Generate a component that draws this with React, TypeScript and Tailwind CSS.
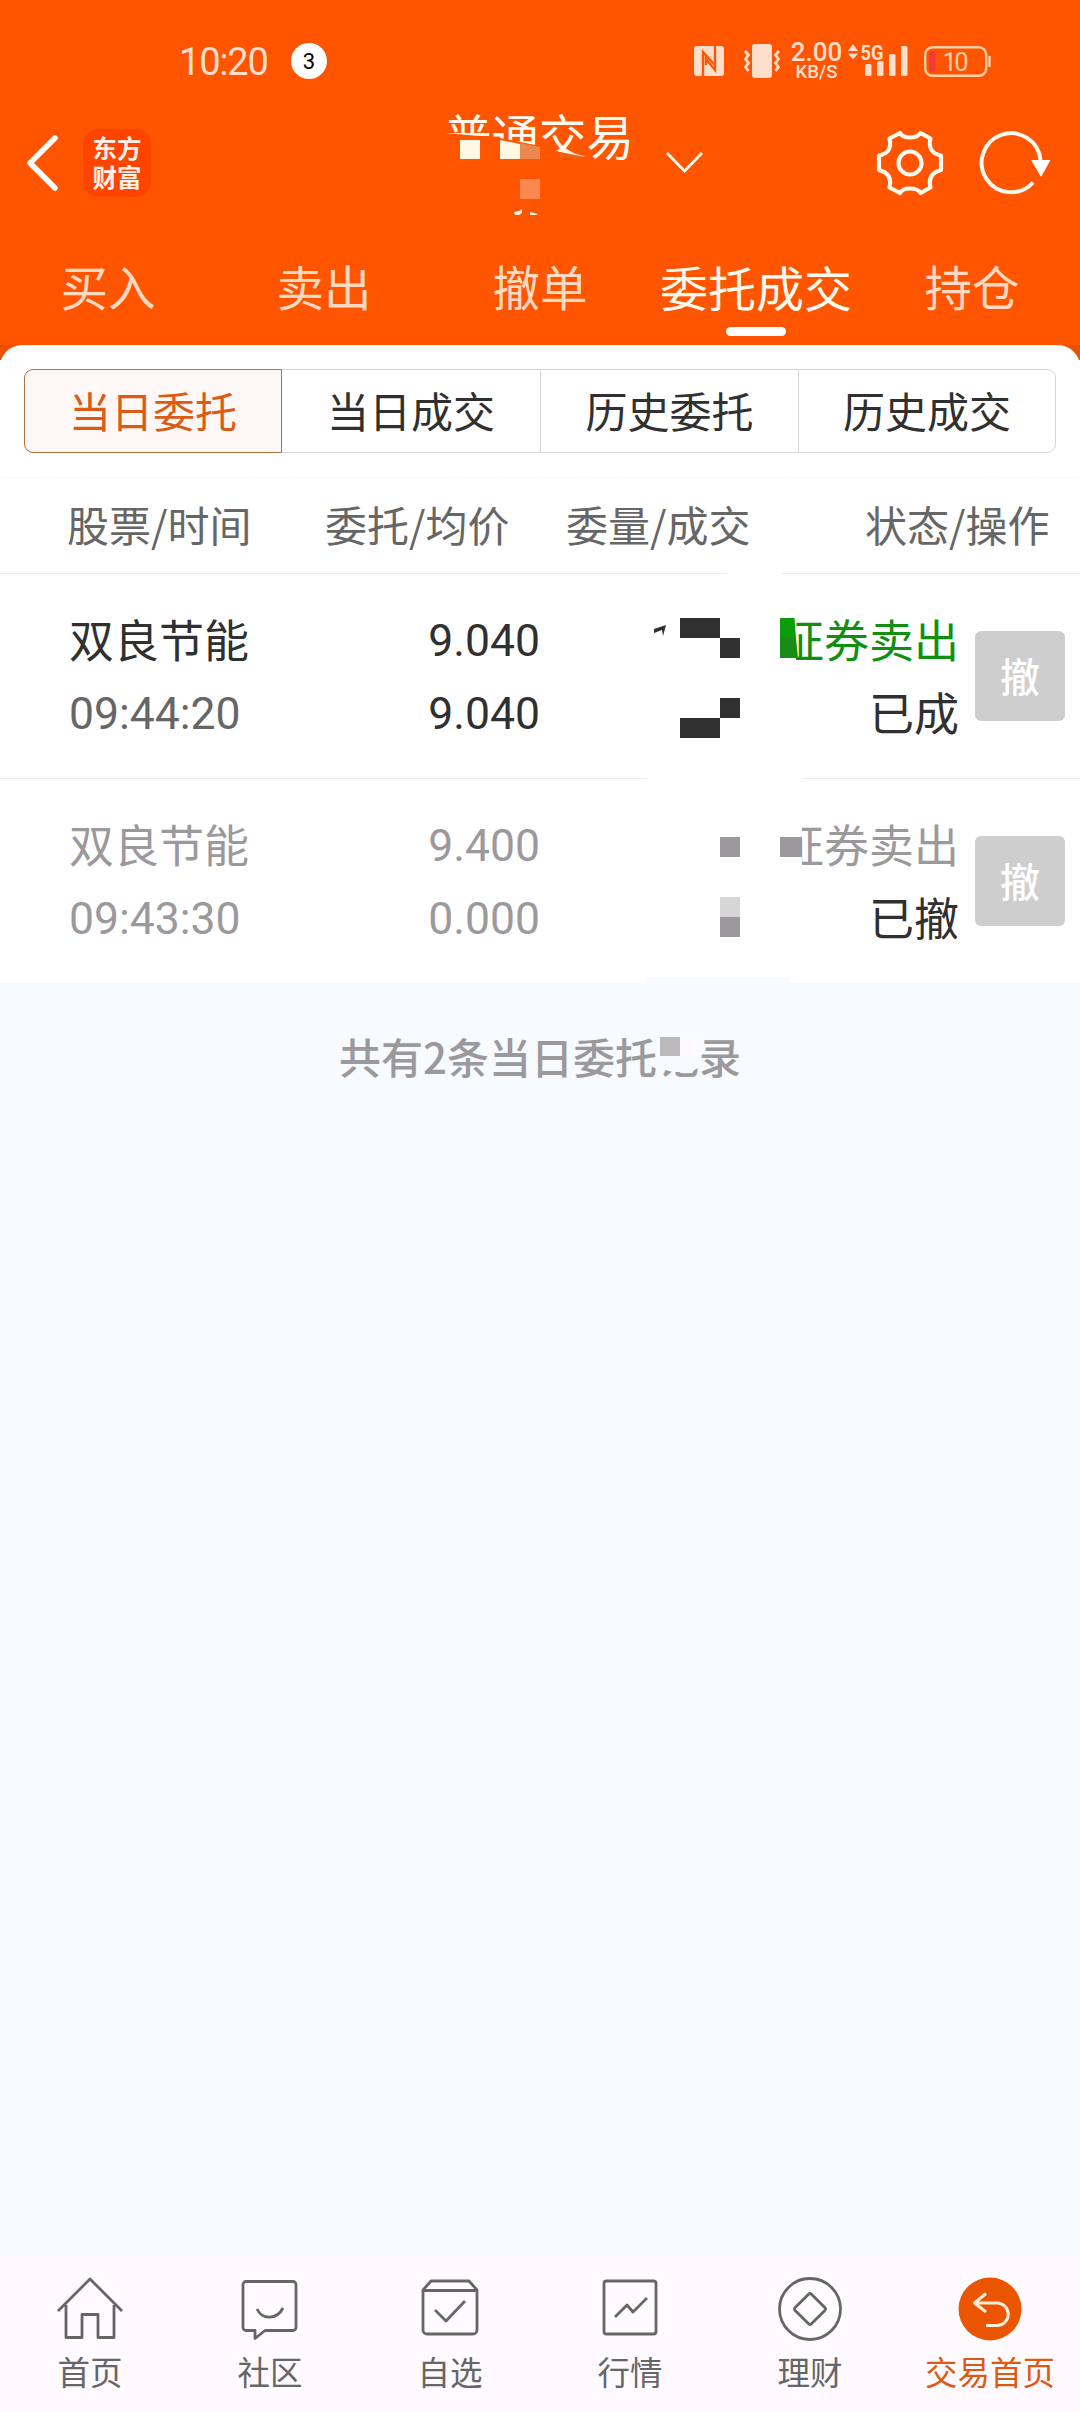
import type { ReactNode } from 'react';

const tabs = ['买入', '卖出', '撤单', '委托成交', '持仓'];
const segments = ['当日委托', '当日成交', '历史委托', '历史成交'];

function StatusBar() {
  return (
    <div className="flex h-[122px] items-center text-[#ffdfcc]">
      <span className="ml-[179px] w-[112px] font-[Roboto] text-[38px] leading-[44px] tracking-[-1.2px] mt-[2px]">10:20</span>
      <span className="flex size-[36px] items-center justify-center rounded-full bg-white font-[Roboto] text-[22px] text-black">3</span>
      <svg className="ml-[367px] h-[36px] w-[86px]" viewBox="0 0 86 36" fill="none">
        <rect x="0" y="3" width="30" height="30" rx="3" fill="#ffdfcc" />
        <path d="M9 33V9l12 13V14M21 3v24L12 16v6" stroke="#ff5500" strokeWidth="2.4" />
        <rect x="58" y="1" width="20" height="34" rx="3" fill="#ffdfcc" />
        <path d="M51 8l3.500 4-3 4 3 4-3 4 3 4M85 8l-3.500 4 3 4-3 4 3 4-3 4" stroke="#ffdfcc" strokeWidth="2.8" />
      </svg>
      <div className="ml-[9px] flex w-[55px] flex-col items-center font-[Roboto] font-medium">
        <span className="text-[26px] leading-[20px]">2.00</span>
        <span className="mt-px text-[18.5px] leading-[18px]">KB/S</span>
      </div>
      <svg className="ml-[3px] h-[36px] w-[64px]" viewBox="0 0 64 36" fill="#ffdfcc">
        <path d="M1 8l5-7 5 7zM1 10.500h10l-5 6z" />
        <text x="13.500" y="17" fontFamily="Roboto" fontWeight="700" fontSize="21" textLength="23" lengthAdjust="spacingAndGlyphs">5G</text>
        <rect x="18" y="21" width="6.5" height="12" rx="1.5" />
        <rect x="30" y="18" width="6.5" height="15" rx="1.5" />
        <rect x="42" y="11" width="6.5" height="22" rx="1.5" />
        <rect x="54" y="3" width="6.5" height="30" rx="1.5" />
      </svg>
      <svg className="ml-[13px] h-[34px] w-[70px]" viewBox="0 0 70 34" fill="none">
        <rect x="1.2" y="3.2" width="61" height="28.6" rx="7.5" stroke="#ffcfa6" strokeWidth="2.4" />
        <rect x="5" y="7" width="6.5" height="21" rx="3" fill="#f23a3a" />
        <path d="M65.5 12v11" stroke="#ffcfa6" strokeWidth="2.4" />
        <text x="18.500" y="26.5" fontFamily="Roboto" fontSize="25.5" fill="#ffcfa6" textLength="26">10</text>
      </svg>
    </div>
  );
}

function TitleBar() {
  return (
    <div className="flex h-[82px] items-center">
      <svg className="ml-[23px] h-[60px] w-[38px]" viewBox="0 0 38 60" fill="none" stroke="#fff" strokeWidth="5.5" strokeLinecap="round" strokeLinejoin="round">
        <path d="M32 5L7 30l25 25" />
      </svg>
      <div className="ml-[22px] flex size-[68px] flex-col items-center justify-center rounded-[15px] bg-[#ff4400] text-[24.5px] font-bold leading-[29px] text-[#fff1ea]">
        <span className="relative top-[-1px]">东方</span>
        <span className="relative top-[-1px]">财富</span>
      </div>
      <div className="relative ml-[296px] h-[100px] w-[190px] self-start">
        <span className="absolute left-[-3px] top-[-15px] whitespace-nowrap text-[47.5px] leading-[56px] text-[#fffaf0]">普通交易</span>
        <svg className="absolute left-[-7px] top-[-22px] h-[120px] w-[200px]" viewBox="440 100 200 120" fill="#ff5500">
          <path d="M440 132.500L490 137L500 138L540 146L556 151L573 153L588 157V172H440z" />
          <path d="M460 140h20v19h-20zM500 140l20 4v15h-20z" fill="#fff8e4" />
          <path d="M520 143l20 4v12h-20z" fill="#ea8850" />
          <path d="M558 150l8 1 20 6-14-2-13-3z" fill="#fff8e4" />
          <path d="M560 152l20 4v3l-20-2z" fill="#ee6012" />
          <rect x="520" y="179" width="20" height="20" fill="#fa8850" />
          <path d="M514 212l5-1 3-2v4l-3 2h-4zM530 212l8 2-2 1h-6z" fill="#fff8e4" />
        </svg>
      </div>
      <svg className="ml-[28px] h-[22px] w-[40px]" viewBox="0 0 40 22" fill="none" stroke="#fffaf0" strokeWidth="2.8">
        <path d="M2 1l17.500 18L37 1" />
      </svg>
      <svg className="ml-[170px] size-[70px]" viewBox="-35 -35 70 70" fill="none" stroke="#fffaf0" strokeWidth="4.2" strokeLinejoin="round">
        <circle r="11.500" />
        <path d="M-10-30C-7-24 7-24 10.500-30L20.500-24.500C18-14 23-9 31-7.500V7C23 9 18 14 20.500 24.500L10.500 30C7 24-7 24-10 30L-20.500 24.500C-18 14-23 9-31 7V-7.500C-23-9-18-14-20.500-24.500Z" />
      </svg>
      <svg className="ml-[31px] size-[76px]" viewBox="-35 -38 76 76" fill="none">
        <path d="M29.500-3A29.500 29.500 0 1 0 22 19.500" stroke="#fffaf0" strokeWidth="4" />
        <path d="M20-3h19.500L30 14z" fill="#fff" />
      </svg>
    </div>
  );
}

function Tabs() {
  return (
    <div className="grid h-[141px] grid-cols-5">
      {tabs.map((t) => (
        <div key={t} className="flex flex-col items-center whitespace-nowrap pt-[54px]">
          <span className={t === '委托成交' ? 'text-[48px] leading-[56px] text-[#fffaf0]' : 'text-[47.5px] leading-[56px] text-[#ffd9c0]'}>{t}</span>
          {t === '委托成交' && <span className="mt-[13px] h-[9px] w-[60px] rounded-full bg-white" />}
        </div>
      ))}
    </div>
  );
}

function Segments() {
  return (
    <div className="grid h-[84px] grid-cols-4 text-[42px] leading-none text-[#303030]">
      {segments.map((s, i) => (
        <div
          key={s}
          className={
            'flex items-center justify-center pb-[2px] ' +
            (i === 0
              ? 'rounded-l-[9px] border border-[#b0703f] bg-[#fff6f6] text-[#dc5a14]'
              : i === 3
                ? 'rounded-r-[9px] border border-[#d6d6da]'
                : i === 2
                  ? 'border-y border-l border-[#d6d6da]'
                  : 'border-y border-[#d6d6da]')
          }
        >
          {s}
        </div>
      ))}
    </div>
  );
}

function TableHead() {
  return (
    <div className="flex h-[96px] border-b border-[#ececec] pt-[18px] text-[42px] leading-[56px] text-[#666] whitespace-nowrap">
      <span className="ml-[67px] w-[258px]">股票/时间</span>
      <span className="w-[241px]">委托/均价</span>
      <span className="w-[299px]">委量/成交</span>
      <span>状态/操作</span>
    </div>
  );
}

interface OrderProps {
  time: string;
  price: string;
  avg: string;
  state: string;
  muted?: boolean;
  children: ReactNode;
}

function Order({ time, price, avg, state, muted, children }: OrderProps) {
  const main = muted ? 'text-[#9b999c]' : 'text-[#303030]';
  const sub = muted ? 'text-[#9b999c]' : 'text-[#666]';
  const side = muted ? 'text-[#9b999c]' : 'text-[#118f11]';
  return (
    <div className="relative flex h-[204px] whitespace-nowrap pt-[30px] text-[45px] leading-[72px]">
      <div className="ml-[69px] w-[271px]">
        <div className={'relative top-[-1px] ' + main}>双良节能</div>
        <div className={'relative top-[2px] font-[Roboto] text-[44.5px] ' + sub}>{time}</div>
      </div>
      <div className={'w-[200px] text-right font-[Roboto] text-[44.5px] ' + main}>
        <div className="relative top-[1px]">{price}</div>
        <div className="relative top-[2px]">{avg}</div>
      </div>
      <div className="w-[419px] text-right text-[45px]">
        <div className={'relative top-[-1px] ' + side}>证券卖出</div>
        <div className="text-[#303030]">{state}</div>
      </div>
      <div className="ml-[16px] mt-[27px] flex size-[90px] items-center justify-center rounded-[6px] bg-[#cecece] pb-[2px] text-[40px] font-medium leading-none text-white">撤</div>
      <svg className="absolute left-[640px] top-0 h-[204px] w-[170px]" viewBox="0 0 170 204">
        {children}
      </svg>
    </div>
  );
}

const navItems: { label: string; icon: ReactNode }[] = [
  {
    label: '首页',
    icon: (
      <path d="M3 37L35 5l32 32M11 31v32.500h16V40.500h16V63.500h16V31" />
    ),
  },
  {
    label: '社区',
    icon: (
      <>
        <path d="M11 7.500h47a3 3 0 0 1 3 3v43a3 3 0 0 1-3 3H30l-10 8v-8h-9a3 3 0 0 1-3-3v-43a3 3 0 0 1 3-3z" />
        <path d="M22 35c5 11 20 11 26-1" />
      </>
    ),
  },
  {
    label: '自选',
    icon: (
      <>
        <path d="M8 16l8-9h38l8 9v40a4 4 0 0 1-4 4H12a4 4 0 0 1-4-4zM8 16.500h54" />
        <path d="M20 36l11 11 19-20" />
      </>
    ),
  },
  {
    label: '行情',
    icon: (
      <>
        <rect x="9" y="7" width="52" height="53" rx="2.500" />
        <path d="M20 43l12-12 6 7 14-14" />
      </>
    ),
  },
  {
    label: '理财',
    icon: (
      <>
        <circle cx="35" cy="35" r="30.500" />
        <rect x="23.500" y="23.500" width="23" height="23" rx="2" transform="rotate(45 35 35)" />
      </>
    ),
  },
  {
    label: '交易首页',
    icon: (
      <>
        <circle cx="35" cy="35" r="31.500" fill="#ec5500" stroke="none" />
        <path d="M31 19.500L19.500 29 31 38M19.500 29H42a11 11 0 0 1 0 22.500H31" stroke="#ffecd8" strokeWidth="3" />
      </>
    ),
  },
];

function BottomNav() {
  return (
    <nav className="grid h-[156px] grid-cols-6 bg-[#fefaff]">
      {navItems.map((n) => (
        <div key={n.label} className="flex flex-col items-center whitespace-nowrap pt-[18px]">
          <svg className="size-[70px]" viewBox="0 0 70 70" fill="none" stroke="#666664" strokeWidth="2.800" strokeLinejoin="round">
            {n.icon}
          </svg>
          <span className={'mt-[7px] text-[32.500px] leading-[40px] ' + (n.label === '交易首页' ? 'text-[#dc5a14]' : 'text-[#666]')}>{n.label}</span>
        </div>
      ))}
    </nav>
  );
}

export default function App() {
  return (
    <div className="flex h-[2412px] w-[1080px] flex-col overflow-hidden bg-[#f7faff] font-['Noto_Sans_CJK_SC',sans-serif]">
      <header className="bg-[#ff5500]">
        <StatusBar />
        <TitleBar />
        <Tabs />
      </header>
      <div className="bg-[linear-gradient(#ea5000_15px,#ffffff_15px)]">
        <div className="rounded-t-[22px] bg-white px-[24px] pb-[24px] pt-[24px]">
          <Segments />
        </div>
      </div>
      <section className="bg-white">
        <div className="border-t border-dashed border-[#f5f5f7]" />
        <div className="relative">
          <TableHead />
          <span className="absolute bottom-0 left-[727px] h-px w-[54px] bg-white" />
        </div>
        <div className="border-b border-[#ececec]">
          <Order time="09:44:20" price="9.040" avg="9.040" state="已成">
            <rect x="134" y="40" width="22" height="52" fill="#fff" />
            <path d="M140 44h14.500l1.500 20h-16z" fill="#0a9c0a" />
            <path d="M140 64h16l2 20h-18z" fill="#178c17" />
            <path d="M40 44h40v20h-40zM80 64h20v20H80zM80 124h20v20H80zM40 144h40v20h-40z" fill="#303030" />
            <path d="M14 55l12-4-3 11-1-6-8 3z" fill="#303030" />
          </Order>
        </div>
        <div className="relative">
          <span className="absolute left-[647px] top-[-1px] h-px w-[155px] bg-white" />
          <Order time="09:43:30" price="9.400" avg="0.000" state="已撤" muted>
            <rect x="134" y="40" width="28" height="52" fill="#fff" />
            <path d="M80 58h20v20H80zM140 58h22v20h-22zM80 138h20v20H80z" fill="#9b999c" />
            <rect x="80" y="118" width="20" height="20" fill="#d6d6d6" />
            <rect x="7" y="198" width="142" height="6" fill="#f7faff" />
          </Order>
        </div>
      </section>
      <main className="relative flex flex-1 justify-center pt-[45px]">
        <span className="text-[42px] leading-[56px] font-medium text-[#9b999c]">共有2条当日委托记录</span>
        <svg className="absolute left-[650px] top-[41px] h-[70px] w-[70px]" viewBox="650 1024 70 70">
          <path d="M658 1034h43v24l-3 10-7 4-18 0-15-4z" fill="#f7faff" />
          <rect x="660" y="1037" width="20" height="19" fill="#bbb9bc" />
          <rect x="680" y="1037" width="20" height="19" fill="#fdf9ff" />
        </svg>
      </main>
      <BottomNav />
    </div>
  );
}
